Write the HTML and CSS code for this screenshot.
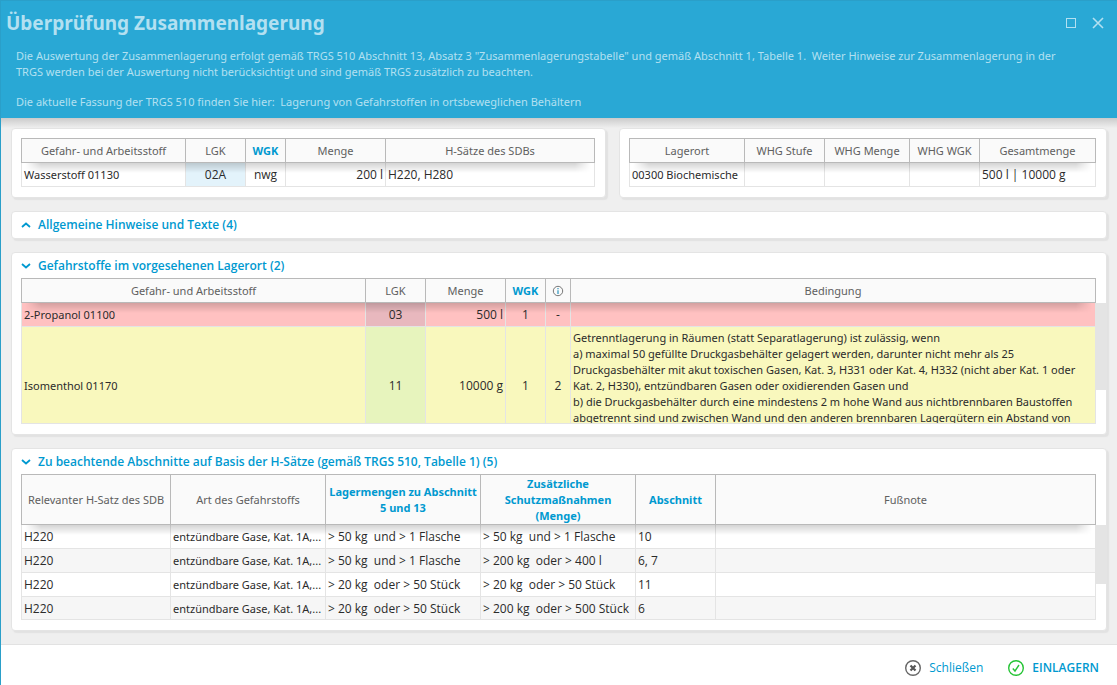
FILE: index.html
```html
<!DOCTYPE html>
<html lang="de">
<head>
<meta charset="utf-8">
<title>Überprüfung Zusammenlagerung</title>
<link rel="stylesheet" href="styles.css">
</head>
<body>
<div class="dialog">
  <header class="banner">
    <div class="titlebar">
      <h1>Überprüfung Zusammenlagerung</h1>
      <div class="window-buttons">
        <button type="button" aria-label="Maximieren"><svg width="12" height="12" viewBox="0 0 12 12"><rect x="1.5" y="1.5" width="9" height="9"/></svg></button>
        <button type="button" aria-label="Fenster schließen"><svg width="12" height="12" viewBox="0 0 12 12"><path d="M1 1 11 11M11 1 1 11" stroke-width="1.6"/></svg></button>
      </div>
    </div>
    <p>Die Auswertung der Zusammenlagerung erfolgt gemäß TRGS 510 Abschnitt 13, Absatz 3 "Zusammenlagerungstabelle" und gemäß Abschnitt 1, Tabelle 1.&nbsp; Weiter Hinweise zur Zusammenlagerung in der TRGS werden bei der Auswertung nicht berücksichtigt und sind gemäß TRGS zusätzlich zu beachten.</p>
    <p>Die aktuelle Fassung der TRGS 510 finden Sie hier:&nbsp; <a href="#trgs">Lagerung von Gefahrstoffen in ortsbeweglichen Behältern</a></p>
  </header>

  <main class="content">
    <div class="top-row">
      <section class="card card-plain">
        <div class="grid">
          <table>
            <colgroup><col class="w164"><col class="w60"><col class="w40"><col class="w100"><col></colgroup>
            <thead><tr><th>Gefahr- und Arbeitsstoff</th><th>LGK</th><th class="link">WGK</th><th>Menge</th><th>H-Sätze des SDBs</th></tr></thead>
            <tbody><tr><td class="name">Wasserstoff 01130</td><td class="center lgk">02A</td><td class="center">nwg</td><td class="right">200 l</td><td>H220, H280</td></tr></tbody>
          </table>
        </div>
      </section>
      <section class="card card-plain">
        <div class="grid">
          <table>
            <colgroup><col class="w115"><col class="w80"><col class="w85"><col class="w70"><col></colgroup>
            <thead><tr><th>Lagerort</th><th>WHG Stufe</th><th>WHG Menge</th><th>WHG WGK</th><th>Gesamtmenge</th></tr></thead>
            <tbody><tr><td class="name">00300 Biochemische</td><td></td><td></td><td></td><td>500 l | 10000 g</td></tr></tbody>
          </table>
        </div>
      </section>
    </div>

    <section class="card card-closed">
      <button type="button" class="toggle" aria-expanded="false"><svg width="10" height="6" viewBox="0 0 10 6"><path d="M1 5 5 1.5 9 5"/></svg>Allgemeine Hinweise und Texte (4)</button>
    </section>

    <section class="card">
      <button type="button" class="toggle" aria-expanded="true"><svg width="10" height="6" viewBox="0 0 10 6"><path d="M1 1 5 4.500 9 1"/></svg>Gefahrstoffe im vorgesehenen Lagerort (2)</button>
      <div class="grid">
        <div class="viewport">
          <table>
            <colgroup><col class="w344"><col class="w60"><col class="w80"><col class="w40"><col class="w25"><col></colgroup>
            <thead><tr><th>Gefahr- und Arbeitsstoff</th><th>LGK</th><th>Menge</th><th class="link">WGK</th><th class="info"><svg width="12" height="12" viewBox="0 0 12 12"><circle cx="6" cy="6" r="4.700" fill="none" stroke="#777"/><path d="M6 5.200V9M6 3V4.300" stroke="#3a9cc4" stroke-width="1.300"/></svg></th><th>Bedingung</th></tr></thead>
            <tbody>
              <tr class="red"><td class="name">2-Propanol 01100</td><td class="center lgk">03</td><td class="right">500 l</td><td class="center">1</td><td class="center">-</td><td></td></tr>
              <tr class="yellow"><td class="name">Isomenthol 01170</td><td class="center lgk">11</td><td class="right">10000 g</td><td class="center">1</td><td class="center">2</td><td class="condition">Getrenntlagerung in Räumen (statt Separatlagerung) ist zulässig, wenn<br>a) maximal 50 gefüllte Druckgasbehälter gelagert werden, darunter nicht mehr als 25 Druckgasbehälter mit akut toxischen Gasen, Kat. 3, H331 oder Kat. 4, H332 (nicht aber Kat. 1 oder Kat. 2, H330), entzündbaren Gasen oder oxidierenden Gasen und<br>b) die Druckgasbehälter durch eine mindestens 2 m hohe Wand aus nichtbrennbaren Baustoffen abgetrennt sind und zwischen Wand und den anderen brennbaren Lagergütern ein Abstand von</td></tr>
            </tbody>
          </table>
        </div>
        <div class="thumb thumb-long"></div>
      </div>
    </section>

    <section class="card">
      <button type="button" class="toggle" aria-expanded="true"><svg width="10" height="6" viewBox="0 0 10 6"><path d="M1 1 5 4.500 9 1"/></svg>Zu beachtende Abschnitte auf Basis der H-Sätze (gemäß TRGS 510, Tabelle 1) (5)</button>
      <div class="grid grid-tall">
        <div class="viewport">
          <table class="striped">
            <colgroup><col class="w149"><col class="w155"><col class="w155"><col class="w155"><col class="w80"><col></colgroup>
            <thead><tr><th>Relevanter H-Satz des SDB</th><th>Art des Gefahrstoffs</th><th class="link">Lagermengen zu Abschnitt<br>5 und 13</th><th class="link">Zusätzliche<br>Schutzmaßnahmen<br>(Menge)</th><th class="link">Abschnitt</th><th>Fußnote</th></tr></thead>
            <tbody>
              <tr><td>H220</td><td class="name">entzündbare Gase, Kat. 1A,...</td><td>&gt; 50 kg&nbsp; und &gt; 1 Flasche</td><td>&gt; 50 kg&nbsp; und &gt; 1 Flasche</td><td>10</td><td></td></tr>
              <tr><td>H220</td><td class="name">entzündbare Gase, Kat. 1A,...</td><td>&gt; 50 kg&nbsp; und &gt; 1 Flasche</td><td>&gt; 200 kg&nbsp; oder &gt; 400 l</td><td>6, 7</td><td></td></tr>
              <tr><td>H220</td><td class="name">entzündbare Gase, Kat. 1A,...</td><td>&gt; 20 kg&nbsp; oder &gt; 50 Stück</td><td>&gt; 20 kg&nbsp; oder &gt; 50 Stück</td><td>11</td><td></td></tr>
              <tr><td>H220</td><td class="name">entzündbare Gase, Kat. 1A,...</td><td>&gt; 20 kg&nbsp; oder &gt; 50 Stück</td><td>&gt; 200 kg&nbsp; oder &gt; 500 Stück</td><td>6</td><td></td></tr>
            </tbody>
          </table>
        </div>
        <div class="thumb thumb-short"></div>
      </div>
    </section>
  </main>

  <footer class="actions">
    <button type="button"><svg width="18" height="18" viewBox="0 0 18 18" fill="none"><circle cx="9" cy="9" r="7.300" stroke="#666" stroke-width="1.400"/><path d="M6.500 6.500 11.500 11.500M11.500 6.500 6.500 11.500" stroke="#555" stroke-width="2.200"/></svg>Schließen</button>
    <button type="button" class="primary"><svg width="18" height="18" viewBox="0 0 18 18" fill="none"><circle cx="9" cy="9" r="7.300" stroke="#25c435" stroke-width="1.400"/><path d="M5.800 9.500 8 12 12 6" stroke="#25c435" stroke-width="1.400"/></svg>EINLAGERN</button>
  </footer>
</div>
</body>
</html>
```
FILE: styles.css
```css
* { box-sizing: border-box; }
body {
  margin: 0;
  font: 12px/16px "Open Sans", "Noto Sans", sans-serif;
  color: #2b2b2b;
}
button {
  margin: 0;
  padding: 0;
  border: 0;
  background: none;
  font: inherit;
  cursor: pointer;
}
svg { display: block; flex: none; }
.dialog {
  display: flex;
  flex-direction: column;
  min-height: 100vh;
  border-left: 1px solid #2a9fc9;
  background: #efefef;
}

.banner {
  padding-bottom: 8px;
  border-top: 1px solid #2a9fc9;
  background: #29a8d5;
  color: #b3e0f1;
  font-family: "Noto Sans", "Open Sans", sans-serif;
  font-size: 11px;
}
.titlebar {
  display: flex;
  justify-content: space-between;
  align-items: center;
  height: 47px;
  padding: 0 13px 4px 5px;
}
h1 {
  margin: 0;
  font-size: 19px;
  line-height: 26px;
  font-weight: 700;
}
.window-buttons { display: flex; gap: 15px; }
.window-buttons svg { fill: none; stroke: #b3e0f1; }
.banner p { margin: 0 36px 14px 15px; }
.banner p:last-child { margin-bottom: 0; }
.banner a { color: inherit; text-decoration: none; }

.content {
  display: flex;
  flex: 1;
  flex-direction: column;
  gap: 13px;
  padding: 10px 10px 13px 10px;
  background: linear-gradient(#cbcbcb, #efefef 10px);
}
.top-row {
  display: grid;
  grid-template-columns: minmax(0, 595fr) minmax(0, 488fr);
  gap: 13px;
}
.card {
  padding: 0 10px 10px 9px;
  border: 1px solid #e4e4e4;
  border-radius: 4px;
  background: #fff;
  box-shadow: 2px 2px 1px #e2e2e2;
}
.card-plain { padding-top: 9px; }
.card-closed { padding-bottom: 1px; }
.toggle {
  display: flex;
  align-items: center;
  gap: 7px;
  height: 25px;
  color: #0099d0;
  font-weight: 600;
}
.toggle svg { fill: none; stroke: #0099d0; stroke-width: 1.8; }

table {
  width: 100%;
  table-layout: fixed;
  border-collapse: collapse;
}
th, td {
  height: 24px;
  padding: 0 2px;
  overflow: hidden;
  white-space: nowrap;
  text-align: left;
}
th {
  padding: 0;
  border: 1px solid #b9b9b9;
  background: #fafafa;
  color: #606060;
  font-family: "Noto Sans", "Open Sans", sans-serif;
  font-size: 11px;
  font-weight: 400;
  text-align: center;
}
td { border: 1px solid #e4e4e4; }
th.link {
  color: #0099d0;
  font-weight: 700;
}
.center { text-align: center; }
.right { text-align: right; }
.name, .condition {
  font-family: "Noto Sans", "Open Sans", sans-serif;
  font-size: 11px;
}
.lgk { background: #e3f3fb; }
.info svg { margin: 0 auto; }
.red { background: #ffc1c1; }
.red .lgk { background: #e8b8be; }
.yellow { background: #f9f8bd; }
.yellow .lgk { background: #e7f4bd; }
.yellow td { height: 118px; }
.yellow .condition {
  padding-top: 3px;
  vertical-align: top;
  white-space: normal;
}
.striped tbody tr:nth-child(even) { background: #f6f6f6; }

.grid { position: relative; }
.grid::after {
  content: "";
  position: absolute;
  top: 25px;
  left: 4px;
  right: 4px;
  height: 10px;
  background: linear-gradient(rgba(0, 0, 0, 0.17), transparent);
  mask-image: linear-gradient(90deg, transparent, #000 16px, #000 calc(100% - 16px), transparent);
  pointer-events: none;
}
.grid-tall th { height: 50px; }
.grid-tall::after { top: 51px; }
.viewport {
  height: 146px;
  overflow: hidden;
  border-bottom: 1px solid #e4e4e4;
}
.thumb {
  position: absolute;
  left: 100%;
  width: 10px;
  background: #e4e4e4;
}
.thumb-long { top: 25px; height: 87px; }
.thumb-short { top: 51px; height: 59px; }

.w25 { width: 25px; }
.w40 { width: 40px; }
.w60 { width: 60px; }
.w70 { width: 70px; }
.w80 { width: 80px; }
.w85 { width: 85px; }
.w100 { width: 100px; }
.w115 { width: 115px; }
.w149 { width: 149px; }
.w155 { width: 155px; }
.w164 { width: 164px; }
.w344 { width: 344px; }

.actions {
  display: flex;
  justify-content: flex-end;
  align-items: center;
  gap: 24px;
  height: 41px;
  padding: 5px 18px 0 0;
  border-top: 1px solid #e2e2e2;
  background: #fff;
}
.actions button {
  display: flex;
  align-items: center;
  gap: 7px;
  color: #0099d0;
}
.actions .primary { font-weight: 600; }
```
